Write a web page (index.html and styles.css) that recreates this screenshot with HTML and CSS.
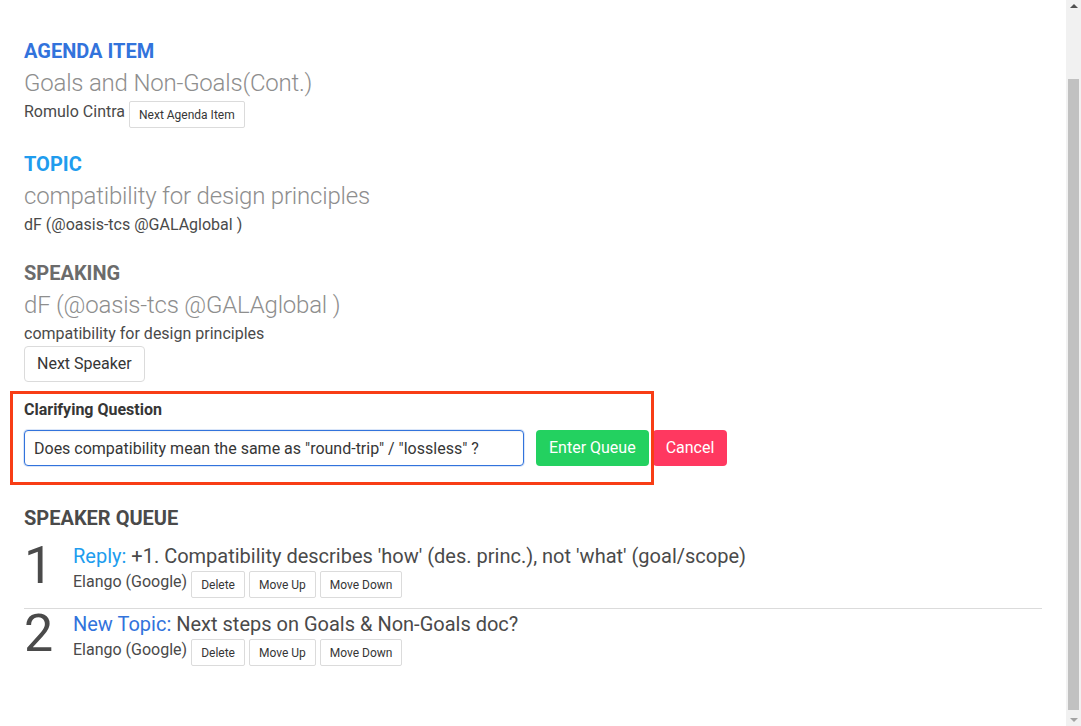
FILE: index.html
```html
<!DOCTYPE html>
<html lang="en">
<head>
<meta charset="utf-8">
<title>Queue</title>
<link rel="stylesheet" href="styles.css">
</head>
<body>
<main class="page">
  <section class="block">
    <h2 class="kicker kicker-link">AGENDA ITEM</h2>
    <h3 class="subtitle">Goals and Non-Goals(Cont.)</h3>
    <div class="meta-row">
      <span class="meta-text">Romulo Cintra</span>
      <button class="btn btn-small">Next Agenda Item</button>
    </div>
  </section>

  <section class="block">
    <h2 class="kicker kicker-info">TOPIC</h2>
    <h3 class="subtitle">compatibility for design principles</h3>
    <div class="meta-row">
      <span class="meta-text">dF (@oasis-tcs @GALAglobal )</span>
    </div>
  </section>

  <section class="block">
    <h2 class="kicker kicker-grey">SPEAKING</h2>
    <h3 class="subtitle">dF (@oasis-tcs @GALAglobal )</h3>
    <div class="meta-row">
      <span class="meta-text">compatibility for design principles</span>
    </div>
    <button class="btn btn-normal next-speaker">Next Speaker</button>
  </section>

  <form class="entry-form">
    <label class="field-label" for="q">Clarifying Question</label>
    <div class="controls">
      <input id="q" class="text-input" type="text" value="Does compatibility mean the same as &quot;round-trip&quot; / &quot;lossless&quot; ?">
      <button type="button" class="btn btn-normal btn-success">Enter Queue</button>
      <button type="button" class="btn btn-normal btn-danger">Cancel</button>
    </div>
  </form>

  <section class="queue">
    <h2 class="kicker kicker-dark">SPEAKER QUEUE</h2>
    <ol class="queue-list">
      <li class="queue-item">
        <div class="queue-num">1</div>
        <div class="queue-body">
          <div class="queue-topic"><span class="type-reply">Reply:</span> +1. Compatibility describes 'how' (des. princ.), not 'what' (goal/scope)</div>
          <div class="meta-row queue-meta">
            <span class="meta-text">Elango (Google)</span>
            <button class="btn btn-small">Delete</button>
            <button class="btn btn-small">Move Up</button>
            <button class="btn btn-small">Move Down</button>
          </div>
        </div>
      </li>
      <li class="queue-item">
        <div class="queue-num">2</div>
        <div class="queue-body">
          <div class="queue-topic"><span class="type-new">New Topic:</span> Next steps on Goals &amp; Non-Goals doc?</div>
          <div class="meta-row queue-meta">
            <span class="meta-text">Elango (Google)</span>
            <button class="btn btn-small">Delete</button>
            <button class="btn btn-small">Move Up</button>
            <button class="btn btn-small">Move Down</button>
          </div>
        </div>
      </li>
    </ol>
  </section>
</main>
<aside class="scrollbar" aria-hidden="true">
  <div class="sb-btn"><span class="sb-arrow-up"></span></div>
  <div class="sb-track"><div class="sb-thumb"></div></div>
  <div class="sb-btn"><span class="sb-arrow-down"></span></div>
</aside>
</body>
</html>
```

FILE: styles.css
```css
* { box-sizing: border-box; }

html, body {
  margin: 0;
  padding: 0;
  background: #ffffff;
}

body {
  font-family: Roboto, "Liberation Sans", sans-serif;
  color: #4a4a4a;
  font-size: 16px;
  line-height: 24px;
  display: flex;
  height: 100vh;
  overflow: hidden;
}

.page {
  flex: 1;
  min-width: 0;
  padding: 39px 24px 0;
}

/* fake browser scrollbar */
.scrollbar {
  flex: none;
  width: 15px;
  height: 100vh;
  background: #f1f1f1;
  display: flex;
  flex-direction: column;
}

.sb-btn {
  flex: none;
  height: 15px;
  display: flex;
  align-items: center;
  justify-content: center;
}

.sb-arrow-up {
  width: 0;
  height: 0;
  border-left: 4px solid transparent;
  border-right: 4px solid transparent;
  border-bottom: 4px solid #505050;
  margin-top: -3px;
}

.sb-arrow-down {
  width: 0;
  height: 0;
  border-left: 4px solid transparent;
  border-right: 4px solid transparent;
  border-top: 4px solid #a3a3a3;
  margin-top: 3px;
}

.sb-track {
  flex: 1;
  padding: 64px 2px 0;
}

.sb-thumb {
  height: 631px;
  background: #c1c1c1;
}

.block + .block {
  margin-top: 24px;
}

.kicker {
  margin: 0;
  font-size: 20px;
  line-height: 25px;
  font-weight: 700;
}

.kicker-link { color: #3273dc; }
.kicker-info { color: #209cee; }
.kicker-grey { color: #6b6b6b; }
.kicker-dark { color: #4a4a4a; }

.subtitle {
  margin: 4px 0 0;
  font-family: "Roboto Light", Roboto, "Liberation Sans", sans-serif;
  font-size: 24px;
  line-height: 30px;
  font-weight: 300;
  letter-spacing: -0.2px;
  color: #8e8e8e;
}

.meta-row {
  display: flex;
  align-items: flex-start;
  gap: 4px;
  margin-top: 2px;
}

.meta-text {
  font-size: 16px;
  line-height: 24px;
  color: #4a4a4a;
  white-space: nowrap;
}

.btn {
  font-family: Roboto, "Liberation Sans", sans-serif;
  background: #ffffff;
  color: #363636;
  border: 1px solid #dbdbdb;
  cursor: pointer;
  white-space: nowrap;
  display: inline-flex;
  align-items: center;
  justify-content: center;
}

.btn-small {
  font-size: 12px;
  height: 27px;
  line-height: 18px;
  padding: 0 9px;
  border-radius: 2px;
  margin-top: 1px;
}

.btn-normal {
  font-size: 16px;
  height: 36px;
  line-height: 24px;
  padding: 0 12px;
  border-radius: 4px;
}

.next-speaker {
  margin-top: 0;
}

.btn-success {
  background: #23d160;
  border-color: transparent;
  color: #ffffff;
}

.btn-danger {
  background: #ff3860;
  border-color: transparent;
  color: #ffffff;
}

.entry-form {
  position: relative;
  margin: 15px 0 0;
}

.entry-form::before {
  content: "";
  box-sizing: border-box;
  position: absolute;
  left: -14px;
  top: -6px;
  width: 644px;
  height: 94px;
  border: 3px solid #f83d15;
  pointer-events: none;
}

.field-label {
  display: block;
  font-size: 16px;
  line-height: 24px;
  font-weight: 700;
  color: #363636;
  padding-top: 1px;
}

.controls {
  display: flex;
  align-items: flex-start;
  margin-top: 8px;
}

.text-input {
  width: 500px;
  height: 36px;
  font-family: Roboto, "Liberation Sans", sans-serif;
  font-size: 16px;
  color: #363636;
  padding: 0 9px;
  border: 1px solid #3273dc;
  border-radius: 4px;
  box-shadow: 0 0 0 1px rgba(50, 115, 220, 0.18), inset 0 1px 2px rgba(10, 10, 10, 0.05);
  outline: none;
  margin-right: 12px;
}

.btn-success { margin-right: 4px; }

.queue {
  margin-top: 40px;
}

.queue-list {
  list-style: none;
  margin: 13px 0 0;
  padding: 0;
}

.queue-item {
  display: flex;
  align-items: flex-start;
}

.queue-item + .queue-item {
  border-top: 1px solid #dbdbdb;
  margin-top: 10px;
  padding-top: 3px;
}

.queue-num {
  flex: none;
  width: 49px;
  font-size: 52px;
  line-height: 52px;
  font-weight: 400;
  color: #4a4a4a;
  margin-top: -4px;
}

.queue-body {
  flex: 1;
  min-width: 0;
}

.queue-topic {
  font-size: 20px;
  line-height: 25px;
  color: #4a4a4a;
  white-space: nowrap;
}

.type-reply { color: #209cee; }
.type-new { color: #3273dc; }

.queue-meta {
  margin-top: 1px;
}
```
